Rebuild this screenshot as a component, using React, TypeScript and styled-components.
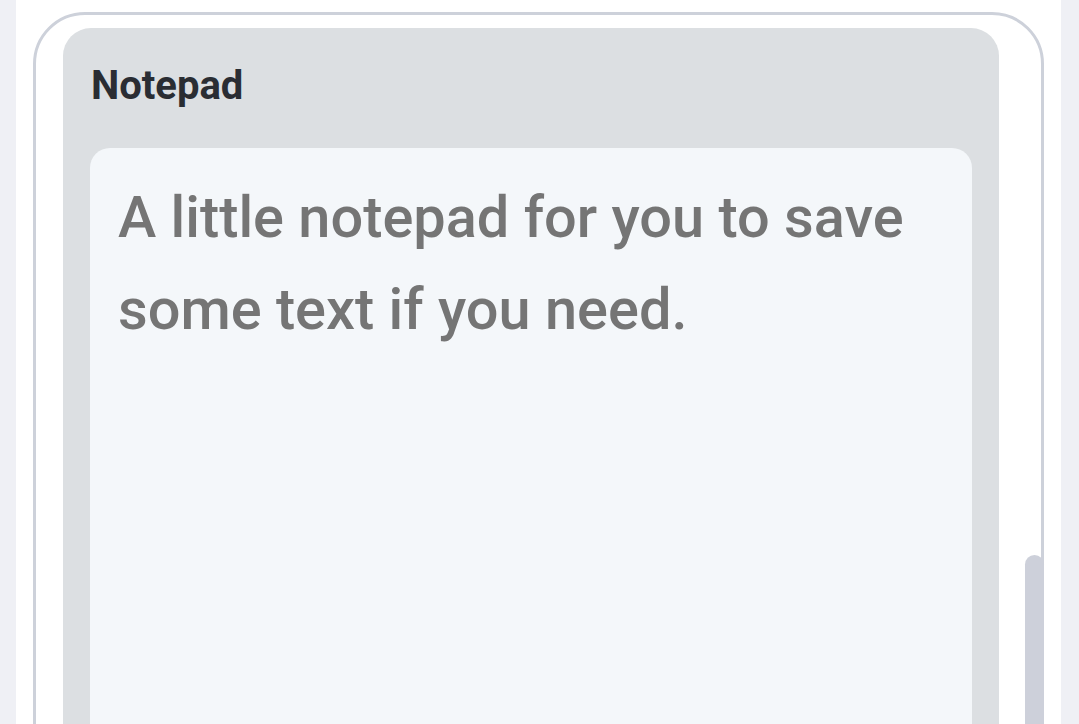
import React from 'react'
import styled, { createGlobalStyle } from 'styled-components'

const GlobalStyle = createGlobalStyle`
    html, body {
        margin: 0;
        padding: 0;
        background: #eff0f5;
        overflow: hidden;
        font-family: Roboto, "Noto Sans", sans-serif;
    }
`

const Page = styled.div`
    height: 724px;
    margin: 0 18px 0 16px;
    background: #ffffff;
    padding: 12px 17px 0 17px;
    box-sizing: border-box;
`

const Card = styled.div`
    position: relative;
    height: 800px;
    border: 3px solid #cdd1da;
    border-radius: 52px;
    padding: 13px 42px 0 27px;
    box-sizing: border-box;
`

const ScrollThumb = styled.div`
    position: absolute;
    right: -3px;
    top: 540px;
    width: 19px;
    height: 400px;
    border-radius: 10px;
    background: #cdd0da;
`

const Panel = styled.section`
    background: #dcdfe2;
    border-radius: 28px;
    padding: 34px 27px 0 27px;
    height: 900px;
    box-sizing: border-box;
`

const Title = styled.h2`
    margin: 0 0 38px 1px;
    font-size: 40px;
    line-height: 48px;
    font-weight: 700;
    color: #2a2d33;
`

const NoteArea = styled.textarea`
    display: block;
    width: 100%;
    height: 700px;
    box-sizing: border-box;
    border: none;
    outline: none;
    resize: none;
    border-radius: 20px;
    background: #f4f7fa;
    padding: 23px 28px;
    font-family: Roboto, "Noto Sans", sans-serif;
    font-size: 57.7px;
    font-weight: 500;
    line-height: 92px;
    color: #757575;

    &::placeholder {
        color: #757575;
        opacity: 1;
    }
`

const App: React.FC = () => {
    const [note, setNote] = React.useState<string>('')

    return (
        <>
            <GlobalStyle />
            <Page>
                <Card>
                    <Panel>
                        <Title>Notepad</Title>
                        <NoteArea
                            value={note}
                            onChange={(e) => setNote(e.target.value)}
                            placeholder="A little notepad for you to save some text if you need."
                        />
                    </Panel>
                    <ScrollThumb />
                </Card>
            </Page>
        </>
    )
}

export default App
